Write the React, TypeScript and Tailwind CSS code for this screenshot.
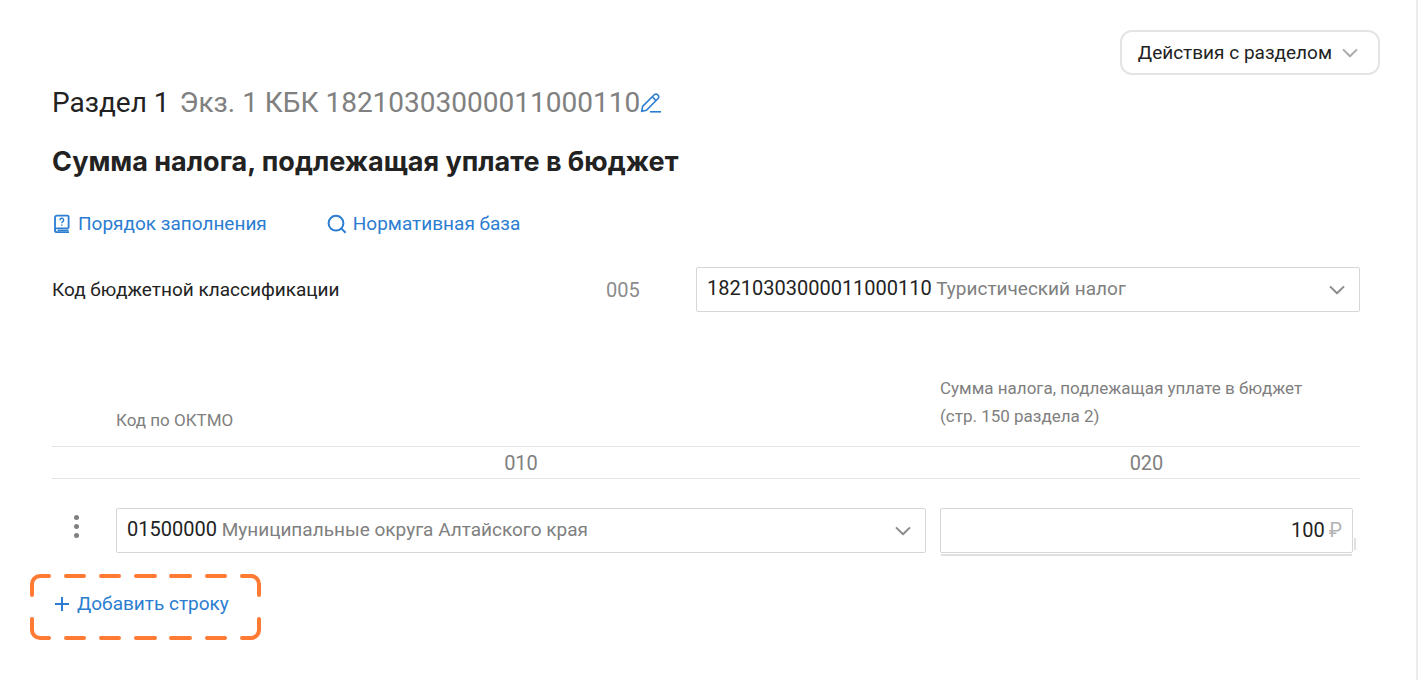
import type { ReactNode } from "react";

function Chevron({ className }: { className: string }) {
  return (
    <svg viewBox="0 0 16 10" fill="none" stroke="currentColor" strokeWidth="2" strokeLinejoin="round" className={`h-[10px] w-4 shrink-0 ${className}`} aria-hidden="true">
      <path d="M1 1.4 L8 8.2 L15 1.4" />
    </svg>
  );
}

function CodeSelect({ id, label, code, name }: { id: string; label: string; code: string; name: string }) {
  return (
    <div className="relative flex h-[45px] items-center justify-between rounded-xs border border-[#d6d6d6] bg-white pr-3.5 pl-2.5 focus-within:border-[#2a7dd1]">
      <span aria-hidden="true" className="truncate pb-0.5">
        <span className="text-[20px]">{code}</span> <span className="text-[#808080]">{name}</span>
      </span>
      <Chevron className="text-[#8c8c8c]" />
      <select id={id} aria-label={label} className="absolute inset-0 size-full cursor-pointer opacity-0">
        <option>{`${code} ${name}`}</option>
      </select>
    </div>
  );
}

function HelpLink({ icon, children }: { icon: ReactNode; children: ReactNode }) {
  return (
    <a href="#" className="flex items-center gap-1.5 text-[#2a7dd1]">
      {icon}
      {children}
    </a>
  );
}

export default function App() {
  return (
    <main className="min-h-screen border-r-2 border-[#ececec] bg-white pt-[30px] pr-9 pb-8 pl-[52px] font-['Roboto','Liberation_Sans',sans-serif] text-[19px] leading-7 text-[#222]">
      <div className="flex justify-end">
        <button type="button" className="flex h-[45px] items-center gap-2.5 rounded-xl border-2 border-[#e4e4e4] pr-5 pl-4">
          Действия с разделом
          <Chevron className="text-[#aaa]" />
        </button>
      </div>

      <div className="pr-5">
        <header>
          <h1 className="mt-2 flex items-center text-[28px] leading-10">
            Раздел 1<span className="ml-2.5 text-[#808080]">Экз. 1 КБК 18210303000011000110</span>
            <button type="button" aria-label="Изменить" className="text-[#2a7dd1]">
              <svg viewBox="0 0 22 20" fill="none" stroke="currentColor" strokeWidth="1.6" className="h-5 w-[22px]">
                <path d="M1.8 18.2 L2.6 13.4 L14.3 1.7 a2.3 2.3 0 0 1 3.3 0 l.5 .5 a2.3 2.3 0 0 1 0 3.3 L6.4 17.3 Z" />
                <path d="M12.2 3.8 L16 7.6" />
                <path d="M10 18.8 H21" />
              </svg>
            </button>
          </h1>
          <h2 className="mt-[19px] font-['Inter','Liberation_Sans',sans-serif] text-[27px] leading-10 font-bold">Сумма налога, подлежащая уплате в бюджет</h2>
        </header>

        <nav className="mt-7 flex gap-15">
          <HelpLink
            icon={
              <svg viewBox="0 0 20 20" fill="none" stroke="currentColor" className="size-5" aria-hidden="true">
                <path d="M16.6 14.2 V2.8 a1.2 1.2 0 0 0 -1.2 -1.2 H5 a2 2 0 0 0 -2 2 V16.2 a2 2 0 0 0 2 2 H17" strokeWidth="1.8" />
                <path d="M3 16.2 a2 2 0 0 1 2 -2 H16.6 M5.5 16.3 H16.6" strokeWidth="1.5" />
                <path d="M7.9 6.2 a1.9 1.9 0 1 1 2.7 1.7 q-.8 .4 -.8 1.4 M9.8 10.4 V11.8" strokeWidth="1.4" />
              </svg>
            }
          >
            Порядок заполнения
          </HelpLink>
          <HelpLink
            icon={
              <svg viewBox="0 0 20 20" fill="none" stroke="currentColor" strokeWidth="2" className="size-5" aria-hidden="true">
                <circle cx="9" cy="9.2" r="7.4" />
                <path d="M14.2 14.4 L18.6 18.8" />
              </svg>
            }
          >
            Нормативная база
          </HelpLink>
        </nav>

        <div className="mt-[29px] flex items-center">
          <label htmlFor="kbk" className="w-[554px]">
            Код бюджетной классификации
          </label>
          <span className="w-[90px] text-[20px] text-[#8c8c8c]">005</span>
          <div className="flex-1">
            <CodeSelect id="kbk" label="Код бюджетной классификации" code="18210303000011000110" name="Туристический налог" />
          </div>
        </div>

        <table className="mt-[62px] w-full table-fixed">
          <colgroup>
            <col className="w-16" />
            <col />
            <col className="w-[420px]" />
          </colgroup>
          <thead className="text-[#808080]">
            <tr className="text-left align-bottom text-[17px]">
              <td />
              <th className="pb-3 font-normal">Код по ОКТМО</th>
              <th className="pb-4 font-normal">
                Сумма налога, подлежащая уплате в бюджет
                <br />
                (стр. 150 раздела 2)
              </th>
            </tr>
            <tr className="h-8 border-y border-[#e4e4e4] text-[20px]">
              <td />
              <td className="pr-3.5 text-center">010</td>
              <td className="pr-[7px] text-center">020</td>
            </tr>
          </thead>
          <tbody>
            <tr>
              <td className="pt-[29px] pb-2 pl-4">
                <button type="button" aria-label="Действия со строкой" className="flex w-4 flex-col items-center gap-1">
                  <span className="size-[5px] rounded-full bg-[#808080]" />
                  <span className="size-[5px] rounded-full bg-[#808080]" />
                  <span className="size-[5px] rounded-full bg-[#808080]" />
                </button>
              </td>
              <td className="pt-[29px] pr-3.5">
                <CodeSelect id="oktmo" label="Код по ОКТМО" code="01500000" name="Муниципальные округа Алтайского края" />
              </td>
              <td className="pt-[29px] pr-[7px]">
                <div className="relative flex h-[45px] items-center rounded-xs border border-[#d6d6d6] px-2.5 pb-0.5 text-[20px]">
                  <input aria-label="Сумма налога" defaultValue="100" className="min-w-0 flex-1 text-right outline-none" />
                  <span className="ml-1 text-[#b4b4b4]">₽</span>
                  <span className="absolute inset-x-0 -bottom-[4px] h-0.5 bg-[#e0e0e0]" />
                  <span className="absolute -right-1 bottom-0.5 h-3 w-0.5 bg-[#e0e0e0]" />
                </div>
              </td>
            </tr>
          </tbody>
        </table>

        <div className="mt-[37px] flex">
          <button type="button" className="relative flex items-center gap-1.5 text-[#2a7dd1]">
            <svg viewBox="0 0 18 18" fill="none" stroke="currentColor" strokeWidth="2" className="ml-px size-[18px]" aria-hidden="true">
              <path d="M9 2 V16 M2 9 H16" />
            </svg>
            Добавить строку
            <svg viewBox="0 0 231 66" fill="none" stroke="#ff7a33" strokeWidth="4" strokeLinecap="round" className="pointer-events-none absolute -top-4 -left-[22px] h-[66px] w-[231px]" aria-hidden="true">
              <path d="M2 21 V10 A8 8 0 0 1 10 2 H19 M212 2 H221 A8 8 0 0 1 229 10 V21 M229 45 V56 A8 8 0 0 1 221 64 H212 M19 64 H10 A8 8 0 0 1 2 56 V45" />
              <path d="M36 2 H54 M71 2 H89 M106 2 H125 M141 2 H160 M177 2 H195 M36 64 H54 M71 64 H89 M106 64 H125 M141 64 H160 M177 64 H195" />
            </svg>
          </button>
        </div>
      </div>
    </main>
  );
}
